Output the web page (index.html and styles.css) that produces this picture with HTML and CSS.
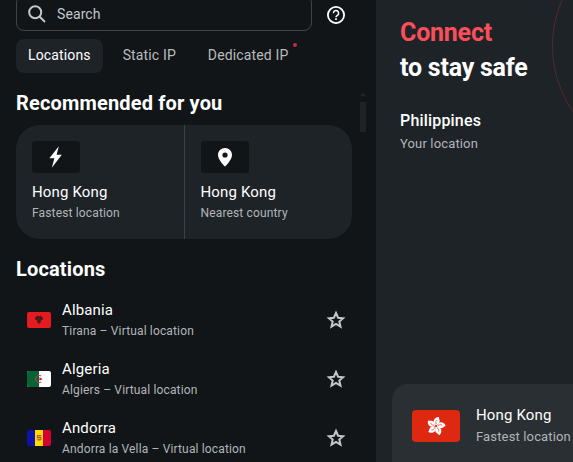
FILE: index.html
```html
<!DOCTYPE html>
<html lang="en">
  <head>
    <meta charset="utf-8">
    <title>Locations</title>
    <link rel="stylesheet" href="styles.css">
  </head>
  <body>
    <div class="sidebar">
        <div class="top">
            <div class="search">
                <svg width="18" height="18" viewBox="0 0 18 18" fill="none" stroke="#c4c6c8" stroke-width="2"><circle cx="7.2" cy="7.2" r="6"/><path d="M11.5 11.5L17 17"/></svg>
                <span>Search</span>
            </div>
            <svg class="help" width="20" height="20" viewBox="0 0 20 20" fill="none" stroke="#fff"><circle cx="10" cy="10" r="8.1" stroke-width="1.8"/><path d="M7.4 8.2a2.6 2.6 0 1 1 4.3 1.9c-.9.7-1.7 1.1-1.7 2.2" stroke-width="1.5"/><path d="M10 13.3v1.7" stroke-width="1.7"/></svg>
        </div>
        <div class="tabs">
            <div class="tab active">Locations</div>
            <div class="tab">Static IP</div>
            <div class="tab">Dedicated IP<span class="dot"></span></div>
        </div>
        <div class="scrollbar"><div class="arrow"></div><div class="thumb"></div></div>

        <h2>Recommended for you</h2>
        <div class="cards">
            <div class="card">
                <div class="badge"><svg width="24" height="24" viewBox="0 0 24 24"><path fill="#fff" d="M14.8 1.2L5.4 13.2h5L7.8 22.8l10-13h-5.2z"/></svg></div>
                <div class="name">Hong Kong</div>
                <div class="sub">Fastest location</div>
            </div>
            <div class="card">
                <div class="badge"><svg width="24" height="24" viewBox="0 0 24 24"><path fill="#fff" fill-rule="evenodd" d="M12 3c-3.9 0-7 3-7 6.9 0 4.9 7 11.6 7 11.6s7-6.7 7-11.6C19 6 15.9 3 12 3zm0 4.4a2.6 2.6 0 1 1 0 5.2 2.6 2.6 0 0 1 0-5.2z"/></svg></div>
                <div class="name">Hong Kong</div>
                <div class="sub">Nearest country</div>
            </div>
        </div>

        <h2 class="all">Locations</h2>
        <div class="row">
            <svg class="flag" width="24" height="16" viewBox="0 0 24 16"><path fill="#e41b20" d="M0 0h24v16H0z"/><path fill="#4b1a1a" d="M12 4.6l1.4-1 1.2.8 1.4 1-.2 2.2-1.3.3-.8.8.5 1.500-1.200.3L12 12.500l-1-2-1.200-.3.500-1.500-.8-.8-1.300-.3L8 5.400l1.400-1 1.200-.8z"/></svg>
            <div class="place">
                <div class="name">Albania</div>
                <div class="sub">Tirana – Virtual location</div>
            </div>
            <svg class="star" width="20" height="20" viewBox="0 0 20 20"><path d="M10 3l2.100 4.700 5 .5-3.800 3.400 1.200 5-4.500-2.700-4.500 2.700 1.200-5-3.800-3.400 5-.5z"/></svg>
        </div>
        <div class="row">
            <svg class="flag" width="24" height="16" viewBox="0 0 24 16"><path fill="#fff" d="M0 0h24v16H0z"/><path fill="#066334" d="M0 0h12v16H0z"/><path fill="none" stroke="#c0404b" d="M14.300 4.900a3.700 3.700 0 1 0 0 6.200"/><path fill="#d21034" d="M11 8l1.600-.5.200-1.600 1 1.300 1.500-.5-.9 1.300.9 1.300-1.500-.5-1 1.300-.2-1.600z"/></svg>
            <div class="place">
                <div class="name">Algeria</div>
                <div class="sub">Algiers – Virtual location</div>
            </div>
            <svg class="star" width="20" height="20" viewBox="0 0 20 20"><path d="M10 3l2.100 4.700 5 .5-3.800 3.400 1.200 5-4.500-2.700-4.500 2.700 1.200-5-3.800-3.400 5-.5z"/></svg>
        </div>
        <div class="row">
            <svg class="flag" width="24" height="16" viewBox="0 0 24 16"><path fill="#0d13a8" d="M0 0h8v16H0z"/><path fill="#fedd00" d="M8 0h8v16H8z"/><path fill="#d50032" d="M16 0h8v16h-8z"/><path fill="#e3a52b" d="M9.500 5h5v5L12 11.500 9.500 10z"/><path fill="none" stroke="#c5531c" d="M14 5.500h-3.500v2H14v2.200h-3.500"/></svg>
            <div class="place">
                <div class="name">Andorra</div>
                <div class="sub">Andorra la Vella – Virtual location</div>
            </div>
            <svg class="star" width="20" height="20" viewBox="0 0 20 20"><path d="M10 3l2.100 4.700 5 .5-3.800 3.400 1.200 5-4.500-2.700-4.500 2.700 1.200-5-3.800-3.400 5-.5z"/></svg>
        </div>
    </div>

    <div class="main">
        <div class="ring"></div>
        <h1><span class="red">Connect</span><br>to stay safe</h1>
        <div class="country">Philippines</div>
        <div class="sub your">Your location</div>
        <div class="connect">
            <svg class="bigflag" width="48" height="32" viewBox="0 0 48 32">
                <defs><g id="petal"><path fill="#fff" d="M0-.8C-3.200-2.200-4.200-5.600-1.600-8.200-.6-9.200.6-9.500 1.600-9.400.6-8.200 3.600-6.600 2.800-4.200 2.400-2.800 1-2 0-.8z"/><path fill="none" stroke="#de2910" stroke-width=".6" d="M0-2C-1.200-3.500-1-4.800.2-6.200"/></g></defs>
                <path fill="#de2910" d="M0 0h48v32H0z"/>
                <g transform="translate(24 16)">
                    <use href="#petal" transform="rotate(10)"/>
                    <use href="#petal" transform="rotate(82)"/>
                    <use href="#petal" transform="rotate(154)"/>
                    <use href="#petal" transform="rotate(226)"/>
                    <use href="#petal" transform="rotate(298)"/>
                </g>
            </svg>
            <div class="place">
                <div class="name">Hong Kong</div>
                <div class="sub">Fastest location</div>
            </div>
        </div>
    </div>
  </body>
</html>
```
FILE: styles.css
```css
* {
    box-sizing: border-box;
}
body {
    margin: 0;
    width: 573px;
    height: 462px;
    overflow: hidden;
    display: flex;
    font-family: Roboto, sans-serif;
    color: white;
    background-color: #111518;
}
svg {
    display: block;
    flex: none;
}
h1, h2 {
    margin: 0;
    font-weight: 700;
}
.sidebar {
    position: relative;
    flex: none;
    width: 376px;
    height: 462px;
    overflow: hidden;
    padding: 0 24px 0 16px;
}
.top {
    display: flex;
    align-items: center;
    gap: 14px;
    height: 36px;
    margin-top: -5px;
}
.search {
    display: flex;
    align-items: center;
    gap: 11px;
    width: 296px;
    height: 36px;
    padding: 2px 0 0 11px;
    border: 1px solid #404447;
    border-radius: 8px;
    font-size: 14px;
    letter-spacing: 0.1px;
    color: #c4c6c8;
}
.help {
    margin-top: 4px;
}
.tabs {
    display: flex;
    gap: 8px;
    margin-top: 8px;
}
.tab {
    position: relative;
    height: 34px;
    padding: 0 12px;
    border-radius: 8px;
    font-size: 14px;
    line-height: 33px;
    letter-spacing: 0.14px;
    white-space: nowrap;
    color: #b9bbbe;
}
.active {
    background-color: #1e2328;
    color: white;
}
.dot {
    position: absolute;
    top: 4px;
    right: 3px;
    width: 4px;
    height: 4px;
    border-radius: 50%;
    background-color: #c52b45;
}
.scrollbar {
    position: absolute;
    top: 93px;
    left: 360px;
    width: 6px;
}
.arrow {
    width: 6px;
    height: 3px;
    background-color: #23272a;
    clip-path: polygon(50% 0, 100% 100%, 0 100%);
}
.thumb {
    height: 30px;
    margin-top: 6px;
    background-color: #1f2326;
}
h2 {
    height: 28px;
    margin-top: 16px;
    font-size: 20px;
    line-height: 28px;
    letter-spacing: 0.16px;
}
.cards {
    display: flex;
    width: 336px;
    height: 114px;
    margin-top: 8px;
    border-radius: 24px;
    background-color: #1e2328;
}
.card {
    width: 50%;
    padding: 16px 0 0 16px;
}
.card:first-child {
    width: 169px;
    border-right: 1px solid #3b4044;
}
.badge {
    display: flex;
    align-items: center;
    justify-content: center;
    width: 48px;
    height: 32px;
    margin-bottom: 8px;
    border-radius: 3px;
    background-color: #111518;
}
.name {
    font-size: 15px;
    line-height: 22px;
    letter-spacing: 0.15px;
    white-space: nowrap;
}
.sub {
    font-size: 12px;
    line-height: 20px;
    letter-spacing: 0.15px;
    white-space: nowrap;
    color: #b2b5b8;
}
.all {
    margin-bottom: 7px;
}
.row {
    display: flex;
    align-items: center;
    height: 59px;
    padding: 0 6px 0 11px;
}
.flag {
    margin-right: 11px;
    overflow: hidden;
    border-radius: 2px;
}
.place {
    flex: 1;
}
.star path {
    fill: none;
    stroke: #c4c6c8;
    stroke-width: 2;
}
.main {
    position: relative;
    flex: 1;
    height: 462px;
    overflow: hidden;
    padding: 15px 0 0 24px;
    background-color: #1e2328;
}
.ring {
    position: absolute;
    top: -70px;
    left: 176px;
    width: 232px;
    height: 232px;
    border: 1px solid #55292e;
    border-radius: 50%;
}
h1 {
    font-size: 25px;
    line-height: 35px;
    letter-spacing: -0.22px;
}
.red {
    color: #fa4f5b;
}
.country {
    margin-top: 24px;
    font-size: 16px;
    font-weight: 500;
    line-height: 24px;
    letter-spacing: 0.18px;
}
.your {
    font-size: 13px;
    line-height: 22px;
}
.connect {
    display: flex;
    align-items: center;
    gap: 16px;
    width: 300px;
    height: 84px;
    margin: 229px 0 0 -8px;
    padding: 0 0 1px 20px;
    border-radius: 16px 16px 0 0;
    background-color: #2a2f33;
}
.connect .name {
    padding-bottom: 1px;
}
.connect .sub {
    font-size: 13px;
}
.bigflag {
    overflow: hidden;
    border-radius: 4px;
}
```
